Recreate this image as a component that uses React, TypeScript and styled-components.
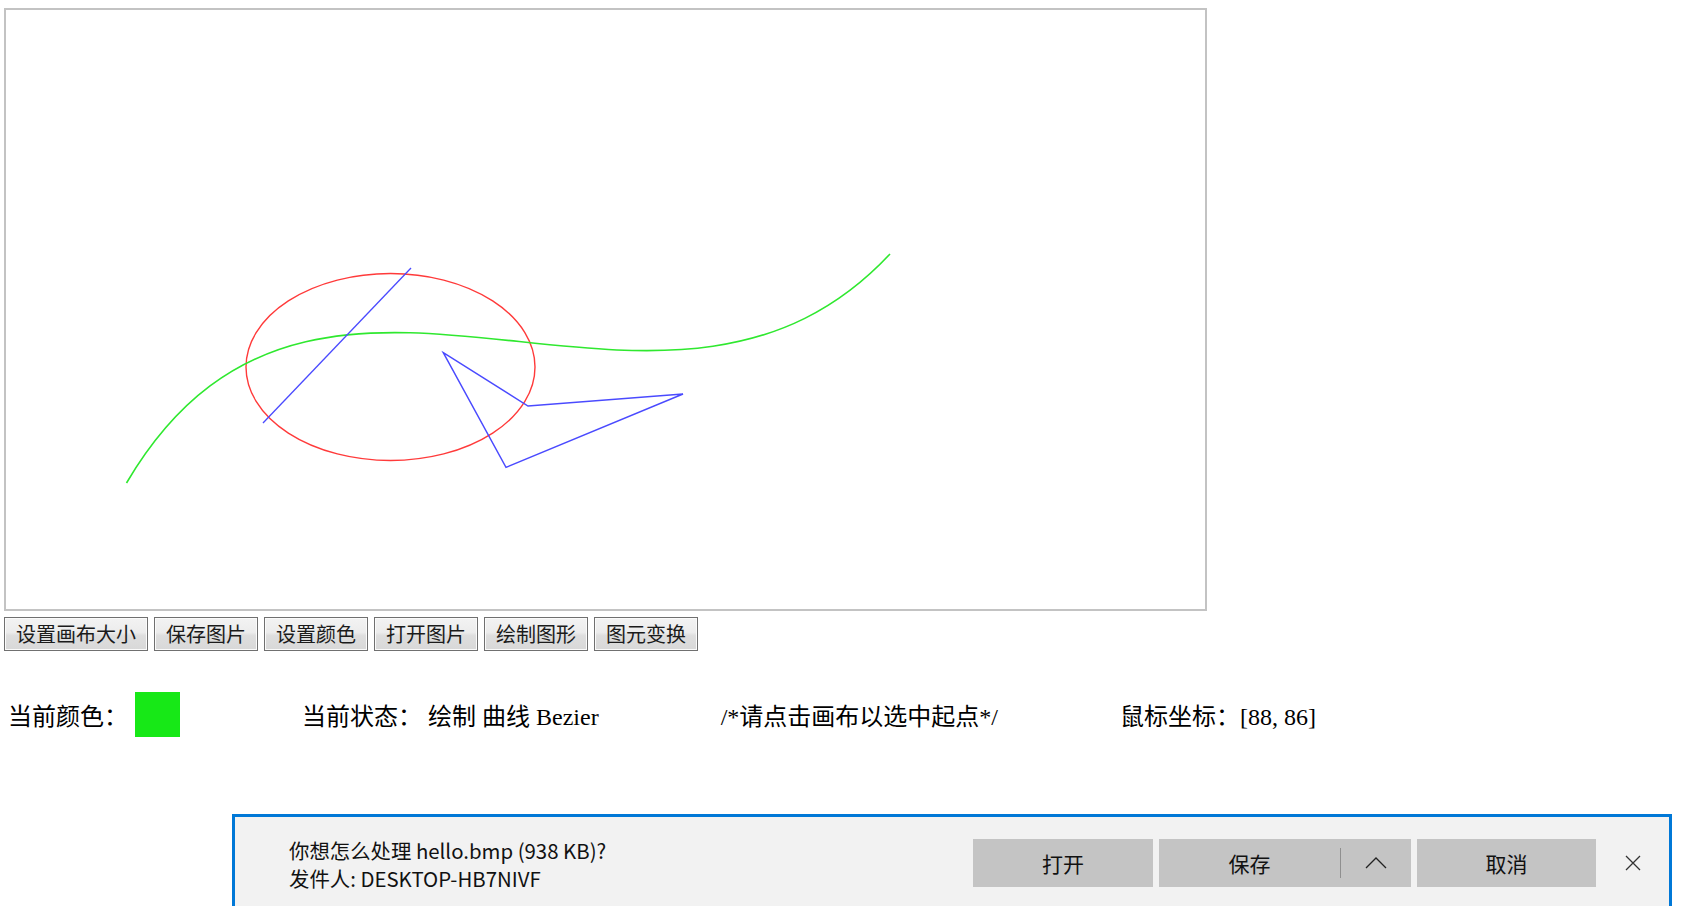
import React from "react";
import styled, { createGlobalStyle } from "styled-components";

const GlobalStyle = createGlobalStyle`
  html, body {
    margin: 0;
    padding: 0;
    background: #ffffff;
    overflow: hidden;
  }
  body {
    font-family: "Liberation Serif", "Noto Sans CJK SC", serif;
    color: #000;
  }
`;

const Page = styled.div`
  padding: 8px 0 0 4px;
  width: 1686px;
  height: 898px;
`;

const CanvasFrame = styled.div`
  width: 1199px;
  height: 599px;
  border: 2px solid #c3c3c3;
  background: #ffffff;
`;

const Drawing = styled.svg`
  display: block;
  width: 100%;
  height: 100%;
`;

const Toolbar = styled.div`
  display: flex;
  gap: 6px;
  margin-top: 6px;
`;

const ToolButton = styled.button`
  box-sizing: border-box;
  height: 34px;
  padding: 0 11px;
  border: 1px solid #707070;
  border-radius: 0;
  background: linear-gradient(#f3f3f3, #ececec 45%, #dedede 55%, #d8d8d8);
  box-shadow: inset 0 0 0 1px #fbfbfb;
  font-family: "Noto Sans CJK SC", sans-serif;
  font-size: 20px;
  line-height: 32px;
  color: #1b1b1b;
  white-space: nowrap;
`;

const StatusRow = styled.div`
  display: flex;
  align-items: center;
  gap: 122px;
  height: 45px;
  margin-top: 41px;
  padding-left: 4px;
  font-size: 24px;
  white-space: nowrap;
`;

const StatusItem = styled.div`
  display: flex;
  align-items: center;
`;

const Swatch = styled.span<{ $color: string }>`
  display: block;
  width: 45px;
  height: 45px;
  margin-left: 7px;
  background: ${(p) => p.$color};
`;

const DownloadBar = styled.div`
  position: fixed;
  top: 814px;
  left: 232px;
  width: 1440px;
  height: 98px;
  box-sizing: border-box;
  border: 3px solid #0078d7;
  background: #f2f2f2;
  display: flex;
  align-items: center;
  padding-left: 54px;
  font-family: "Noto Sans CJK SC", sans-serif;
  font-size: 20.4px;
  color: #111;
`;

const Message = styled.div`
  flex: 1;
  line-height: 28px;
  white-space: nowrap;
  padding-top: 1px;
`;

const BarActions = styled.div`
  display: flex;
  gap: 6px;
`;

const BarButton = styled.div<{ $w: number }>`
  width: ${(p) => p.$w}px;
  height: 48px;
  background: #c4c4c4;
  display: flex;
  align-items: center;
  justify-content: center;
  font-size: 21px;
  color: #111;
`;

const SplitButton = styled.div`
  display: flex;
  align-items: center;
  width: 252px;
  height: 48px;
  background: #c4c4c4;
`;

const SplitMain = styled.div`
  width: 181px;
  text-align: center;
  font-size: 21px;
  color: #111;
`;

const SplitDivider = styled.span`
  display: block;
  width: 1px;
  height: 30px;
  background: #8f8f8f;
`;

const SplitArrow = styled.div`
  flex: 1;
  display: flex;
  align-items: center;
  justify-content: center;
`;

const CloseButton = styled.div`
  width: 16px;
  height: 16px;
  margin: 0 28px 0 29px;
  display: flex;
`;

const App: React.FC = () => {
  const toolButtons = ["设置画布大小", "保存图片", "设置颜色", "打开图片", "绘制图形", "图元变换"];
  return (
    <>
      <GlobalStyle />
      <Page>
        <CanvasFrame>
          <Drawing viewBox="0 0 1199 599">
            <g transform="translate(-6,-10)" fill="none">
              <ellipse cx="390.5" cy="367" rx="144.5" ry="93.5" stroke="#ff3a3a" strokeWidth="1.4" />
              <path
                d="M126.5 483 C 318 158, 660 500, 890 254"
                stroke="#2fe82f"
                strokeWidth="1.6"
              />
              <line x1="263" y1="423" x2="411" y2="268" stroke="#4a4aff" strokeWidth="1.3" />
              <polygon
                points="443.3,352.7 528,406 683,394 506,467.3"
                stroke="#4a4aff"
                strokeWidth="1.4"
                strokeLinejoin="miter"
              />
            </g>
          </Drawing>
        </CanvasFrame>
        <Toolbar>
          {toolButtons.map((t) => (
            <ToolButton key={t}>{t}</ToolButton>
          ))}
        </Toolbar>
        <StatusRow>
          <StatusItem>
            当前颜色：
            <Swatch $color="#17e817" />
          </StatusItem>
          <StatusItem>当前状态： 绘制 曲线 Bezier</StatusItem>
          <StatusItem>/*请点击画布以选中起点*/</StatusItem>
          <StatusItem>鼠标坐标：[88, 86]</StatusItem>
        </StatusRow>
      </Page>
      <DownloadBar>
        <Message>
          <div>你想怎么处理 hello.bmp (938 KB)?</div>
          <div>发件人: DESKTOP-HB7NIVF</div>
        </Message>
        <BarActions>
          <BarButton $w={180}>打开</BarButton>
          <SplitButton>
            <SplitMain>保存</SplitMain>
            <SplitDivider />
            <SplitArrow>
              <svg width="22" height="12" viewBox="0 0 22 12">
                <polyline points="1,11 11,1 21,11" fill="none" stroke="#222" strokeWidth="1.3" />
              </svg>
            </SplitArrow>
          </SplitButton>
          <BarButton $w={179}>取消</BarButton>
        </BarActions>
        <CloseButton>
          <svg width="16" height="16" viewBox="0 0 16 16">
            <path d="M1 1 L15 15 M15 1 L1 15" stroke="#333" strokeWidth="1.3" />
          </svg>
        </CloseButton>
      </DownloadBar>
    </>
  );
};

export default App;
